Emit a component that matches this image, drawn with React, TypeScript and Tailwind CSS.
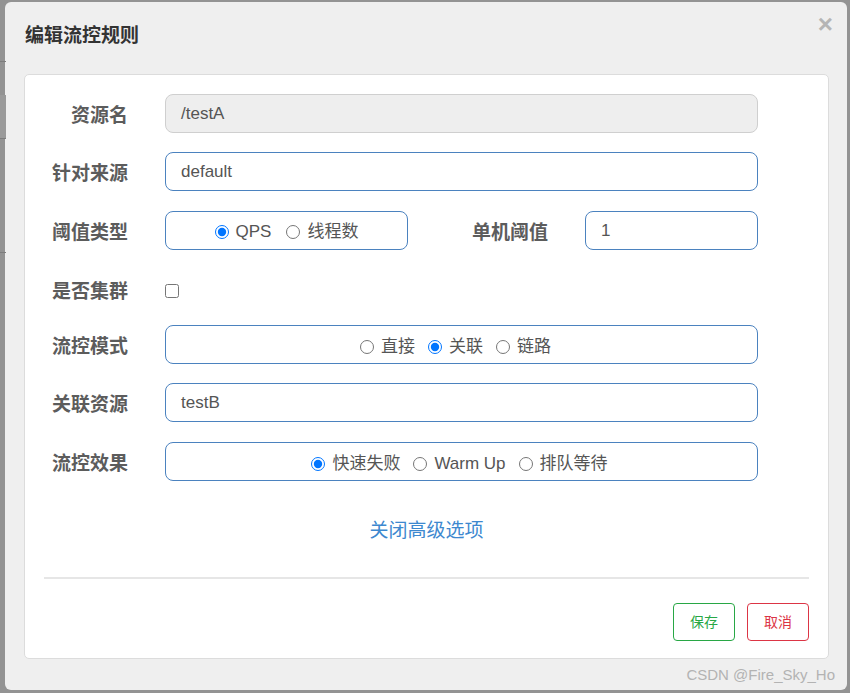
import React from "react";

const font = { fontFamily: '"Liberation Sans", "Noto Sans CJK SC", sans-serif' };

function Radio({ checked, label, name }: { checked?: boolean; label: string; name: string }) {
  return (
    <label className="flex items-center gap-[7px] text-[17px] text-[#555]">
      <input type="radio" name={name} defaultChecked={checked} className="m-0 h-[14px] w-[14px]" />
      <span>{label}</span>
    </label>
  );
}

function Label({ children, w = "w-[84px]" }: { children: React.ReactNode; w?: string }) {
  return (
    <div className={`${w} mt-[5px] shrink-0 text-right text-[19px] font-bold text-[#5c5c5c]`}>{children}</div>
  );
}

export default function App() {
  return (
    <div className="relative h-[693px] w-[850px] overflow-hidden bg-[#939393]" style={font}>
      {/* page behind overlay */}
      <div className="absolute left-0 top-[95px] h-[43px] w-[6px] bg-[#9a9a9a]" />
      <div className="absolute left-0 top-[138px] h-px w-[6px] bg-[#7d7d7d]" />
      <div className="absolute left-0 top-[252px] h-px w-[6px] bg-[#7d7d7d]" />
      <div className="absolute left-0 top-[61px] h-px w-[6px] bg-[#7d7d7d]" />

      <div className="ml-[5px] mt-[2px] flex h-[688px] w-[842px] flex-col rounded-[6px] bg-[#efefef]">
        <div className="flex h-[72px] items-start justify-between pl-[20px] pr-[14px] pt-[20px]">
          <div className="text-[19px] font-bold text-[#333]">编辑流控规则</div>
          <div className="mt-[-11px] text-[26px] font-bold leading-none text-[#b5b5b5]">×</div>
        </div>

        <div className="ml-[19px] flex h-[585px] w-[805px] flex-col rounded-[5px] border border-[#dcdcdc] bg-white px-[19px] pt-[19px]">
          {/* 资源名 */}
          <div className="flex h-[39px] items-center">
            <Label>资源名</Label>
            <div className="ml-[37px] flex h-[39px] w-[593px] items-center rounded-[8px] border border-[#cfcfcf] bg-[#eeeeee] px-[15px] text-[17px] text-[#555]">
              /testA
            </div>
          </div>

          {/* 针对来源 */}
          <div className="mt-[19px] flex h-[39px] items-center">
            <Label>针对来源</Label>
            <div className="ml-[37px] flex h-[39px] w-[593px] items-center rounded-[8px] border border-[#4b82bf] px-[15px] text-[17px] text-[#555]">
              default
            </div>
          </div>

          {/* 阈值类型 */}
          <div className="mt-[20px] flex h-[39px] items-center">
            <Label>阈值类型</Label>
            <div className="ml-[37px] flex h-[39px] w-[243px] items-center justify-center gap-[15px] rounded-[8px] border border-[#4b82bf] pt-[3px]">
              <Radio name="grade" checked label="QPS" />
              <Radio name="grade" label="线程数" />
            </div>
            <Label w="w-[140px]">单机阈值</Label>
            <div className="ml-[37px] flex h-[39px] w-[173px] items-center rounded-[8px] border border-[#4b82bf] px-[15px] text-[17px] text-[#555]">
              1
            </div>
          </div>

          {/* 是否集群 */}
          <div className="mt-[20px] flex h-[39px] items-center">
            <Label>是否集群</Label>
            <input type="checkbox" className="m-0 ml-[37px] mt-[3px] h-[14px] w-[14px]" />
          </div>

          {/* 流控模式 */}
          <div className="mt-[16px] flex h-[39px] items-center">
            <Label>流控模式</Label>
            <div className="ml-[37px] flex h-[39px] w-[593px] items-center justify-center gap-[13px] rounded-[8px] border border-[#4b82bf] pr-[12px] pt-[4px]">
              <Radio name="strategy" label="直接" />
              <Radio name="strategy" checked label="关联" />
              <Radio name="strategy" label="链路" />
            </div>
          </div>

          {/* 关联资源 */}
          <div className="mt-[19px] flex h-[39px] items-center">
            <Label>关联资源</Label>
            <div className="ml-[37px] flex h-[39px] w-[593px] items-center rounded-[8px] border border-[#4b82bf] px-[15px] text-[17px] text-[#555]">
              testB
            </div>
          </div>

          {/* 流控效果 */}
          <div className="mt-[20px] flex h-[39px] items-center">
            <Label>流控效果</Label>
            <div className="ml-[37px] flex h-[39px] w-[593px] items-center justify-center gap-[13px] rounded-[8px] border border-[#4b82bf] pr-[4px] pt-[4px]">
              <Radio name="behavior" checked label="快速失败" />
              <Radio name="behavior" label="Warm Up" />
              <Radio name="behavior" label="排队等待" />
            </div>
          </div>

          <div className="mt-[36px] flex h-[28px] items-center justify-center text-[19px] text-[#3d88cf]">
            关闭高级选项
          </div>

          <div className="mt-[32px] h-[2px] w-full bg-[#e6e6e6]" />

          <div className="mt-[24px] flex justify-end gap-[12px]">
            <div className="flex h-[38px] w-[62px] items-center justify-center rounded-[4px] border border-[#28a745] text-[14px] text-[#28a745]">
              保存
            </div>
            <div className="flex h-[38px] w-[62px] items-center justify-center rounded-[4px] border border-[#dc3545] text-[14px] text-[#dc3545]">
              取消
            </div>
          </div>
        </div>

        <div className="mt-[5px] pr-[12px] text-right text-[15px] text-[#b3b3b3]">CSDN @Fire_Sky_Ho</div>
      </div>
    </div>
  );
}
